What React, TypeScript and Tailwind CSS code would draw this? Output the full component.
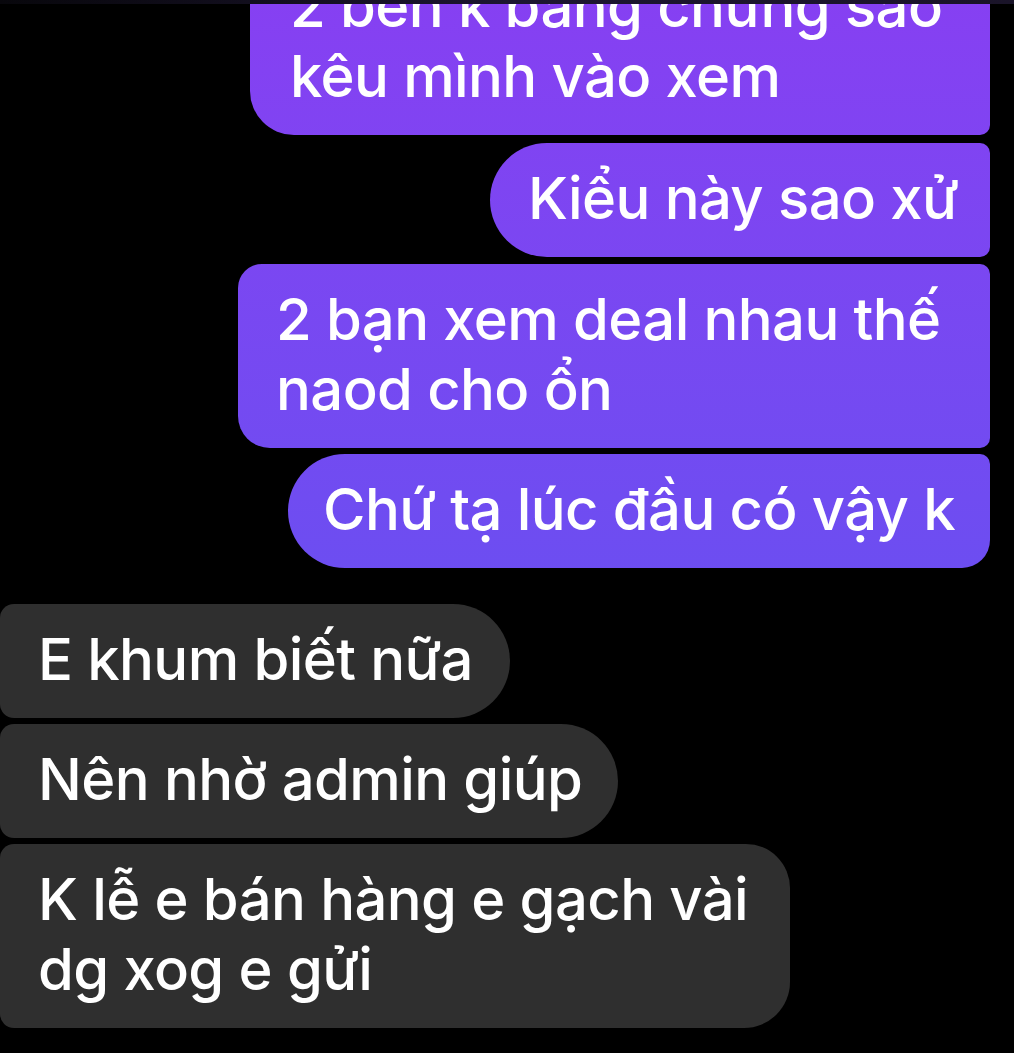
import React from "react";

const font = { fontFamily: "Inter, 'Noto Sans', sans-serif" };

export default function App() {
  return (
    <div
      className="relative w-full h-[1053px] bg-black overflow-hidden flex flex-col text-white text-[58px] font-medium leading-[70px] tracking-[-0.6px]"
      style={font}
    >
      <div className="flex flex-col items-end pr-[24px] -mt-[49px]">
        <div className="w-[740px] pt-[20px] pb-[24px] pl-[40px] rounded-tl-[28px] rounded-bl-[44px] rounded-r-[10px] bg-fixed bg-linear-to-b from-[#8640f2] to-[#5256f0] whitespace-nowrap">
          <div>2 bên k bảng chứng sao</div>
          <div>kêu mình vào xem</div>
        </div>
        <div className="mt-[8px] w-[500px] pt-[20px] pb-[24px] pl-[38px] rounded-l-[57px] rounded-r-[10px] bg-fixed bg-linear-to-b from-[#8640f2] to-[#5256f0] whitespace-nowrap">
          Kiểu này sao xử
        </div>
        <div className="mt-[7px] w-[752px] pt-[20px] pb-[24px] pl-[38px] rounded-tl-[24px] rounded-bl-[32px] rounded-r-[10px] bg-fixed bg-linear-to-b from-[#8640f2] to-[#5256f0] whitespace-nowrap">
          <div>2 bạn xem deal nhau thế</div>
          <div>naod cho ổn</div>
        </div>
        <div className="mt-[6px] w-[702px] pt-[20px] pb-[24px] pl-[35px] rounded-l-[57px] rounded-tr-[10px] rounded-br-[28px] bg-fixed bg-linear-to-b from-[#8640f2] to-[#5256f0] whitespace-nowrap">
          Chứ tạ lúc đầu có vậy k
        </div>
      </div>

      <div className="flex flex-col items-start mt-[36px]">
        <div className="w-[510px] pt-[20px] pb-[24px] pl-[38px] rounded-l-[14px] rounded-r-[57px] bg-[#2f2f2f] whitespace-nowrap">
          E khum biết nữa
        </div>
        <div className="mt-[6px] w-[618px] pt-[20px] pb-[24px] pl-[38px] rounded-l-[14px] rounded-r-[57px] bg-[#2f2f2f] whitespace-nowrap">
          Nên nhờ admin giúp
        </div>
        <div className="mt-[6px] w-[790px] pt-[20px] pb-[24px] pl-[38px] rounded-l-[14px] rounded-tr-[44px] rounded-br-[46px] bg-[#2f2f2f] whitespace-nowrap">
          <div>K lễ e bán hàng e gạch vài</div>
          <div>dg xog e gửi</div>
        </div>
      </div>

      <div className="absolute top-0 left-0 right-0 h-[4px] bg-linear-to-r from-[#08070c] via-[#1d1631] to-[#1a1429]" />
    </div>
  );
}
